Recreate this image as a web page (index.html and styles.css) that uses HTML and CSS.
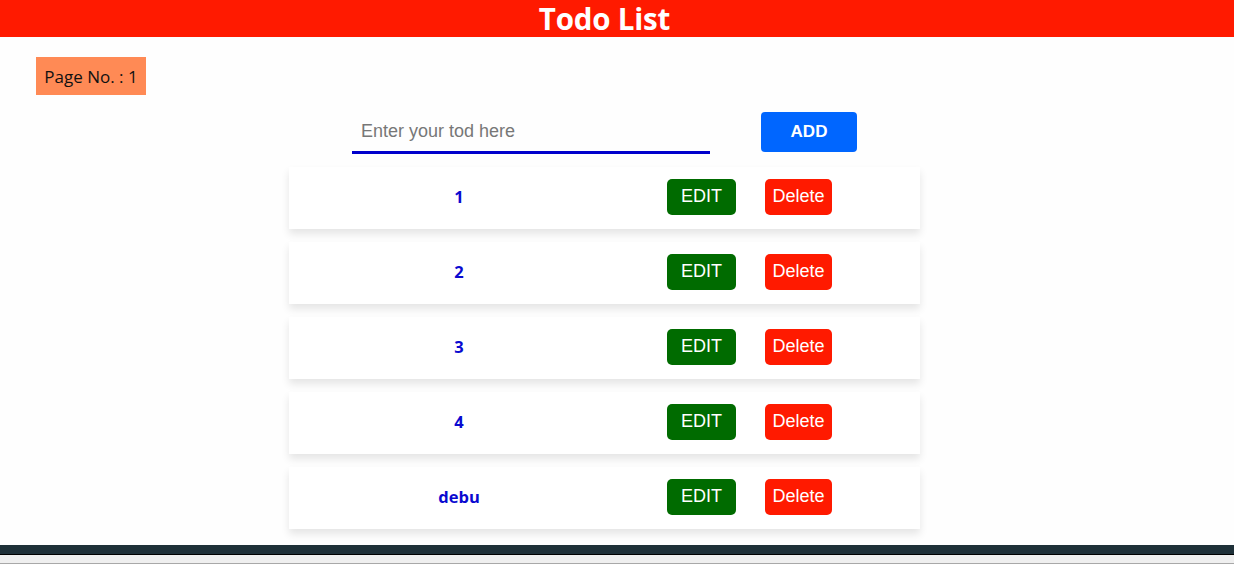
FILE: index.html
```html
<!DOCTYPE html>
<html>
<head>
<meta charset="utf-8">
<link rel="stylesheet" href="styles.css">
</head>
<body>
<header class="topbar"><h1>Todo List</h1></header>
<div class="badge">Page No. : 1</div>
<main class="main">
  <div class="add-row">
    <input class="todo-input" type="text" placeholder="Enter your tod here">
    <button class="add-btn">ADD</button>
  </div>
  <ul class="list">
    <li class="card"><span class="item">1</span><button class="btn edit">EDIT</button><button class="btn del">Delete</button></li>
    <li class="card"><span class="item">2</span><button class="btn edit">EDIT</button><button class="btn del">Delete</button></li>
    <li class="card"><span class="item">3</span><button class="btn edit">EDIT</button><button class="btn del">Delete</button></li>
    <li class="card"><span class="item">4</span><button class="btn edit">EDIT</button><button class="btn del">Delete</button></li>
    <li class="card"><span class="item">debu</span><button class="btn edit">EDIT</button><button class="btn del">Delete</button></li>
  </ul>
</main>
<div class="taskbar"></div>
<div class="statusbar"></div>
</body>
</html>
```
FILE: styles.css
```css
html, body { margin: 0; padding: 0; background: #fefefe; overflow: hidden; }
body { width: 1234px; height: 565px; font-family: "Open Sans", "Noto Sans", sans-serif; }
.topbar { background: #ff1a00; height: 37px; display: flex; align-items: center; justify-content: center; padding-right: 25px; }
.topbar h1 { margin: 0; color: #fff; font-size: 29.5px; font-weight: 700; line-height: 37px; letter-spacing: -0.2px; }
.badge { margin: 20px 0 0 36px; width: 110px; height: 38px; box-sizing: border-box; background: #ff8a55; color: #111; font-size: 17px; display: flex; align-items: center; justify-content: center; }
.main { width: 1209px; display: flex; flex-direction: column; align-items: center; }
.add-row { display: flex; align-items: flex-start; gap: 51px; margin-top: 17px; }
.todo-input { width: 358px; height: 42px; box-sizing: border-box; border: none; border-bottom: 3px solid #0000cc; outline: none; background: transparent; font-family: "Liberation Sans", Arial, sans-serif; font-size: 18px; padding: 0 9px 0; color: #333; }
.todo-input::placeholder { color: #777; }
.add-btn { width: 96px; height: 40px; border: none; border-radius: 4px; background: #0066ff; color: #fff; font-family: "Liberation Sans", Arial, sans-serif; font-weight: 700; font-size: 17px; }
.list { list-style: none; margin: 13px 0 0; padding: 0; display: flex; flex-direction: column; gap: 13px; }
.card { width: 631px; height: 62px; background: #fff; box-shadow: 0 5px 8px rgba(0,0,0,0.10); display: flex; align-items: center; }
.item { width: 340px; text-align: center; color: #0a0ad0; font-weight: 700; font-size: 16.5px; margin-top: -4px; }
.btn { height: 36px; border: none; border-radius: 5px; color: #fff; font-family: "Liberation Sans", Arial, sans-serif; font-size: 18px; padding: 0 0 2px; margin-top: -2px; }
.edit { width: 69px; background: #006b00; margin-left: 38px; }
.del { width: 67px; background: #ff1a00; margin-left: 29px; }
.taskbar { margin-top: 16px; height: 9px; background: #1e3038; border-bottom: 1px solid #000; }
.statusbar { height: 8px; background: #efefef; border-bottom: 1px solid #a8a8a8; }
```
